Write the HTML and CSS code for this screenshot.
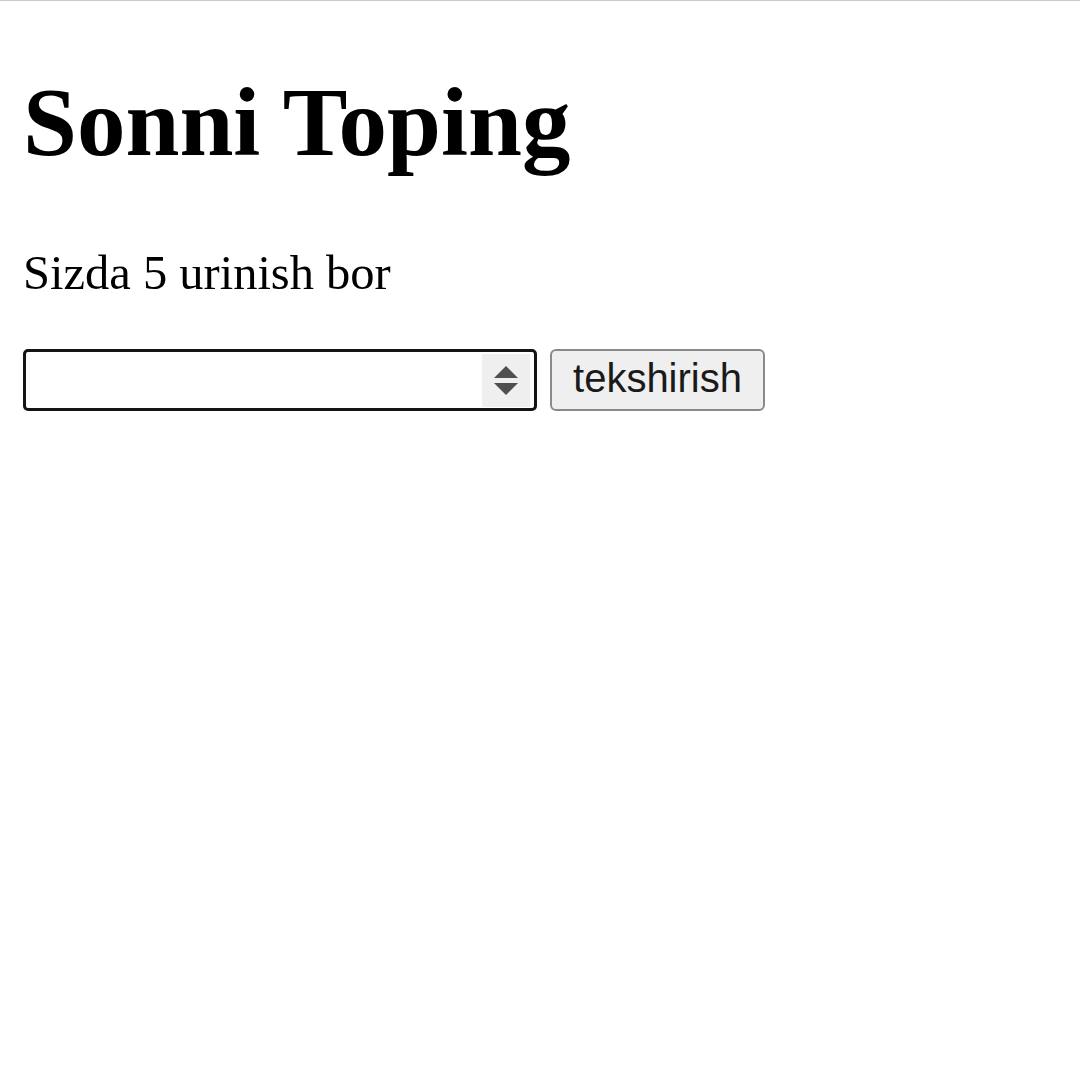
FILE: index.html
```html
<!DOCTYPE html>
<html lang="uz">
<head>
<meta charset="utf-8">
<title>Sonni Toping</title>
<link rel="stylesheet" href="styles.css">
</head>
<body>
<div class="topline"></div>
<main class="page">
  <h1 class="title">Sonni Toping</h1>
  <p class="info">Sizda 5 urinish bor</p>
  <div class="row">
    <div class="numbox">
      <input class="numfield" type="text" aria-label="son">
      <span class="spinner">
        <svg width="24" height="30" viewBox="0 0 24 30">
          <polygon points="12,0 24,12 0,12" fill="#4f4f4f"/>
          <polygon points="0,17 24,17 12,29" fill="#4f4f4f"/>
        </svg>
      </span>
    </div>
    <button class="btn" type="button">tekshirish</button>
  </div>
</main>
</body>
</html>
```
FILE: styles.css
```css
html, body {
  margin: 0;
  padding: 0;
  background: #ffffff;
}
.topline {
  height: 1px;
  background: #c6cad7;
}
.page {
  padding: 0 23px;
  font-family: "Liberation Serif", "Times New Roman", serif;
  color: #000;
}
.title {
  margin: 69px 0 0;
  font-size: 97px;
  line-height: 106px;
  font-weight: bold;
}
.info {
  margin: 70px 0 0;
  font-size: 48.5px;
  line-height: 53px;
}
.row {
  margin-top: 50px;
  display: flex;
  align-items: stretch;
  gap: 13px;
}
.numbox {
  box-sizing: border-box;
  width: 514px;
  height: 62px;
  border: 3px solid #141414;
  border-radius: 5px;
  display: flex;
  align-items: stretch;
  background: #fff;
}
.numfield {
  flex: 1;
  min-width: 0;
  border: none;
  outline: none;
  background: transparent;
  font-family: "Liberation Sans", Arial, sans-serif;
  font-size: 40px;
  padding: 0 6px;
}
.spinner {
  width: 48px;
  margin: 2px 4px 1px 0;
  background: #efefef;
  display: flex;
  align-items: center;
  justify-content: center;
}
.spinner svg {
  display: block;
}
.btn {
  box-sizing: border-box;
  width: 215px;
  height: 62px;
  border: 2px solid #8a8a8a;
  border-radius: 6px;
  background: #efefef;
  font-family: "Liberation Sans", Arial, sans-serif;
  font-size: 40px;
  color: #1a1a1a;
  padding: 0 0 4px;
  display: flex;
  align-items: center;
  justify-content: center;
}
```
